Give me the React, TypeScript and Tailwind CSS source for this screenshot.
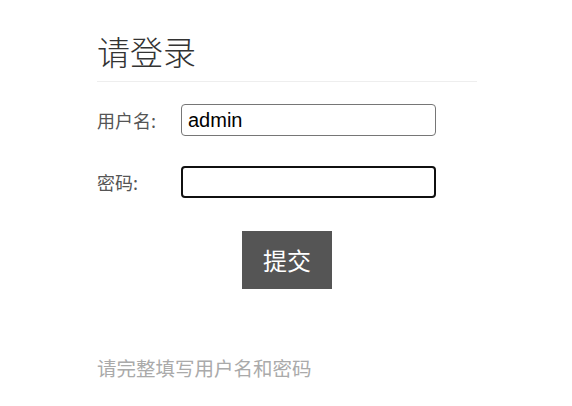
export default function App() {
  return (
    <div className="min-h-screen bg-white pt-[29px] font-['Liberation_Sans','Noto_Sans_CJK_SC',sans-serif]">
      <div className="ml-[97px] w-[380px]">
        <div className="border-b border-[#eeeeee] pb-[8px]">
          <h1 className="h-[44px] text-[33px] leading-[44px] font-light text-[#333333] font-['Noto_Sans_CJK_SC',sans-serif]">
            请登录
          </h1>
        </div>

        <div className="mt-[22px] flex items-center">
          <label className="w-[84px] text-[18px] text-[#555555] font-['Noto_Sans_CJK_SC',sans-serif]">用户名:</label>
          <input
            type="text"
            defaultValue="admin"
            className="h-[32px] w-[255px] rounded-[4px] border border-[#767676] px-[6px] text-[20px] text-black outline-none"
          />
        </div>

        <div className="mt-[30px] flex items-center">
          <label className="w-[84px] text-[18px] text-[#555555] font-['Noto_Sans_CJK_SC',sans-serif]">密码:</label>
          <input
            type="password"
            className="h-[32px] w-[255px] rounded-[4px] border-2 border-[#101010] px-[6px] text-[20px] outline-none"
          />
        </div>

        <div className="mt-[33px] flex justify-center">
          <button className="h-[58px] w-[90px] bg-[#555555] text-[24px] text-white font-['Noto_Sans_CJK_SC',sans-serif]">
            提交
          </button>
        </div>

        <p className="mt-[65px] text-[19.5px] leading-[28px] text-[#aaaaaa] font-['Noto_Sans_CJK_SC',sans-serif]">
          请完整填写用户名和密码
        </p>
      </div>
    </div>
  );
}
